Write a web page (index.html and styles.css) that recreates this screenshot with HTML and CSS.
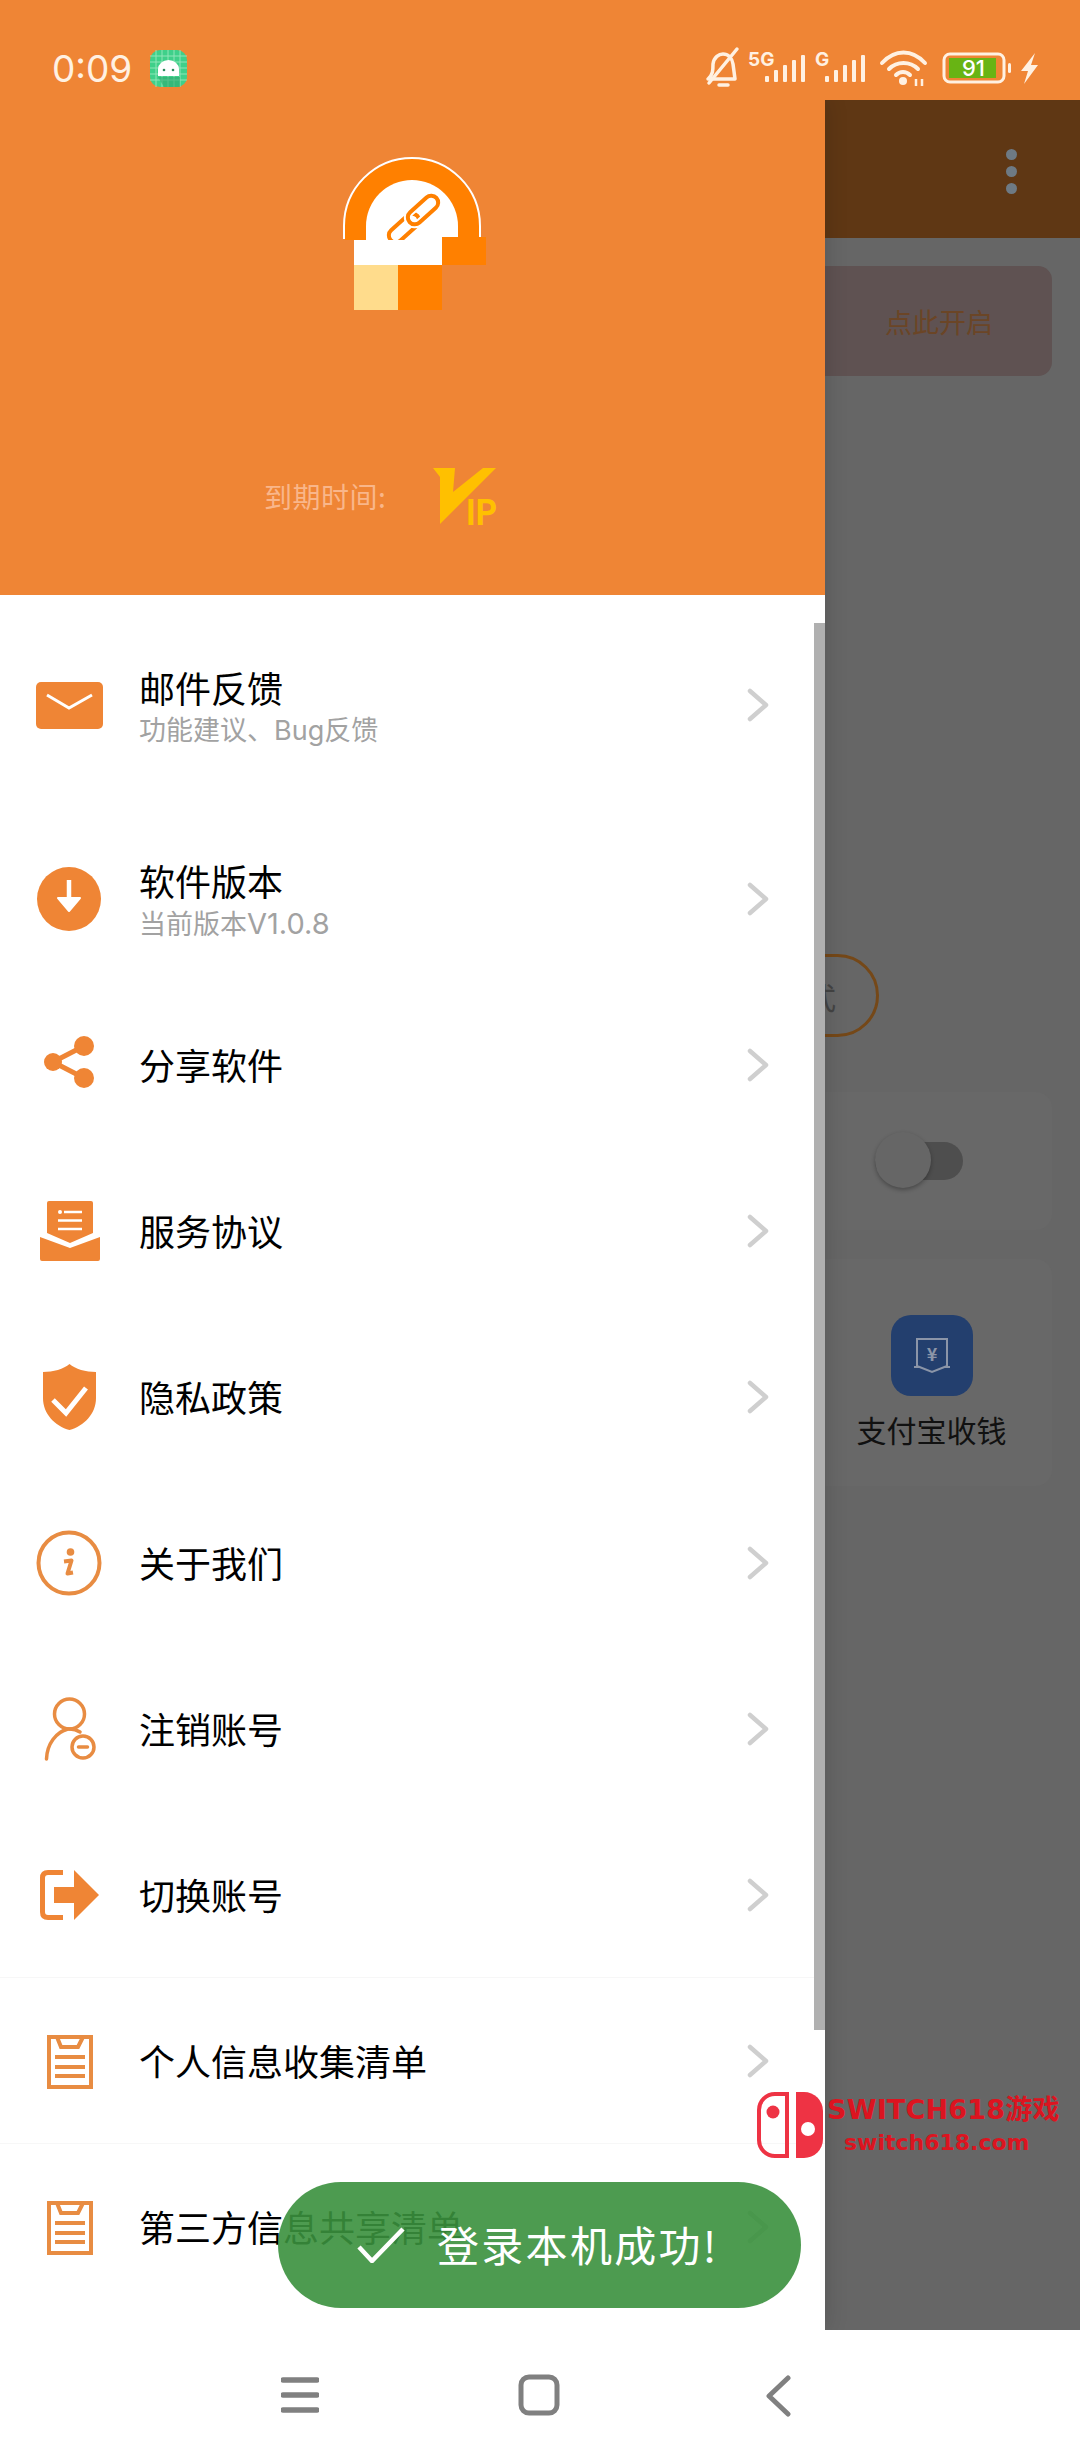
FILE: index.html
```html
<!DOCTYPE html>
<html lang="zh-CN">
<head>
<meta charset="utf-8">
<title>抽屉菜单</title>
<link rel="stylesheet" href="styles.css">
</head>
<body>
<div class="app">
  <header class="status">
    <span class="time">0:09</span>
    <svg class="android" viewBox="0 0 37 37">
      <rect width="37" height="37" rx="10" fill="#3fd08a"/>
      <path d="M6 0V37M12 0V37M18 0V37M24 0V37M30 0V37M0 6H37M0 12H37M0 18H37M0 24H37M0 30H37" stroke="#8fe6b8" stroke-width="1"/>
      <path d="M8 27L14 37H30V27Z" fill="#2fa86e" opacity=".6"/>
      <path d="M8 26V19A10.500 9 0 0 1 29 19V26Z" fill="#fff"/>
      <circle cx="14" cy="20" r="1.300" fill="#2a8a5c"/><circle cx="23" cy="20" r="1.300" fill="#2a8a5c"/>
    </svg>
    <svg class="indicators" viewBox="700 45 340 45">
      <g fill="none" stroke="#fff1e2" stroke-width="3.500" stroke-linecap="round" stroke-linejoin="round">
        <path d="M708 79C713 75 713 70 713 64C714 57 719 54 723 54C728 54 732 58 733 64L735 79Z"/>
        <path d="M737 49L709 83"/>
        <path d="M719 85H728"/>
      </g>
      <text class="net" x="748" y="66">5G</text>
      <g fill="#fff1e2">
        <rect x="765" y="76" width="4" height="6" rx="1"/><rect x="774" y="70" width="4" height="12" rx="1"/><rect x="783" y="65" width="4" height="17" rx="1"/><rect x="792" y="60" width="4" height="22" rx="1"/><rect x="801" y="55" width="4" height="27" rx="1"/>
      </g>
      <text class="net" x="815" y="66">G</text>
      <g fill="#fff1e2">
        <rect x="825" y="76" width="4" height="6" rx="1"/><rect x="834" y="70" width="4" height="12" rx="1"/><rect x="843" y="65" width="4" height="17" rx="1"/><rect x="852" y="60" width="4" height="22" rx="1"/><rect x="861" y="55" width="4" height="27" rx="1"/>
      </g>
      <g fill="none" stroke="#fff1e2" stroke-width="4" stroke-linecap="round">
        <path d="M882 63C895 49 912 49 925 63"/>
        <path d="M889 69C897 61 910 61 918 69"/>
        <path d="M896 75C900 71 906 71 910 75"/>
      </g>
      <circle cx="903" cy="81" r="4" fill="#fff1e2"/>
      <path d="M916 79V86M922 79V86" stroke="#fff1e2" stroke-width="2.500"/>
      <rect x="944" y="54" width="60" height="28" rx="6" fill="none" stroke="#fff1e2" stroke-width="3"/>
      <rect x="949" y="58" width="47" height="20" fill="#68b414"/>
      <text class="batt" x="962" y="76">91</text>
      <rect x="1008" y="63" width="3" height="10" rx="1.500" fill="#fff1e2"/>
      <path d="M1035 53L1021 71H1028L1024 84L1038 65H1031Z" fill="#fff1e2"/>
    </svg>
  </header>

  <main class="main">
    <aside class="drawer">
      <section class="drawer-head">
        <svg class="logo" viewBox="340 157 146 153">
          <path d="M345 240V226A67 67 0 0 1 479 226V240Z" fill="#ff8000"/>
          <path d="M344 239V226A68 68 0 0 1 480 226V239" fill="none" stroke="#fff" stroke-width="2"/>
          <path d="M366 240V226A46 46 0 0 1 458 226V240Z" fill="#fff"/>
          <g fill="none" stroke-width="4">
            <rect x="386" y="221" width="36" height="14" rx="7" transform="rotate(-42 404 228)" stroke="#ff8000"/>
            <rect x="405" y="203" width="36" height="14" rx="7" transform="rotate(-42 423 210)" stroke="#fff" stroke-width="8"/>
            <rect x="405" y="203" width="36" height="14" rx="7" transform="rotate(-42 423 210)" stroke="#ff8000"/>
          </g>
          <rect x="354" y="240" width="88" height="25" fill="#fff"/>
          <rect x="442" y="237" width="44" height="28" fill="#ff8000"/>
          <rect x="354" y="265" width="44" height="45" fill="#ffdc8c"/>
          <rect x="398" y="265" width="44" height="45" fill="#ff8000"/>
        </svg>
        <div class="expiry">
          <span class="expiry-label">到期时间:</span>
          <svg class="vip" viewBox="0 0 64 58">
            <path d="M0 1H22L20 25L50 1H63L7 57V10Z" fill="#ffc000"/>
            <text class="vip-text" x="33" y="58" textLength="31" lengthAdjust="spacingAndGlyphs">IP</text>
          </svg>
        </div>
      </section>

      <nav class="menu">
        <a class="row row-first">
          <svg class="ico" viewBox="0 0 70 70"><rect x="2" y="12" width="67" height="47" rx="5" fill="#ef8535"/><path d="M13 25L35 38L58 25" fill="none" stroke="#fff" stroke-width="3"/></svg>
          <div class="labels labels-two"><div class="title">邮件反馈</div><div class="sub">功能建议、Bug反馈</div></div>
          <svg class="chev" viewBox="0 0 24 34"><path d="M4 3L20 17L4 31" /></svg>
        </a>
        <a class="row row-second">
          <svg class="ico" viewBox="0 0 70 70"><circle cx="35" cy="35" r="32" fill="#ef8535"/><path d="M35 16V36" stroke="#fff" stroke-width="4.500"/><path d="M24 34H46L35 47Z" fill="#fff" stroke="#fff" stroke-width="2" stroke-linejoin="round"/></svg>
          <div class="labels labels-two"><div class="title">软件版本</div><div class="sub">当前版本<span class="ver">V1.0.8</span></div></div>
          <svg class="chev" viewBox="0 0 24 34"><path d="M4 3L20 17L4 31" /></svg>
        </a>
        <a class="row">
          <svg class="ico" viewBox="0 0 70 70"><path d="M50 16L19 32L50 48" fill="none" stroke="#ef8535" stroke-width="5"/><circle cx="19" cy="32" r="9" fill="#ef8535"/><circle cx="50" cy="16" r="10" fill="#ef8535"/><circle cx="50" cy="48" r="10" fill="#ef8535"/></svg>
          <div class="labels"><div class="title">分享软件</div></div>
          <svg class="chev" viewBox="0 0 24 34"><path d="M4 3L20 17L4 31" /></svg>
        </a>
        <a class="row">
          <svg class="ico" viewBox="0 0 70 70"><path d="M13 7Q13 5 15 5H57Q59 5 59 7V37L36 47L13 37Z" fill="#ef8535"/><path d="M6 41L36 52L66 41V63Q66 65 64 65H8Q6 65 6 63Z" fill="#ef8535"/><circle cx="26" cy="16" r="2" fill="#fff"/><path d="M30 16H48M24 24.500H48M24 33H48" stroke="#fff" stroke-width="2.500"/></svg>
          <div class="labels"><div class="title">服务协议</div></div>
          <svg class="chev" viewBox="0 0 24 34"><path d="M4 3L20 17L4 31" /></svg>
        </a>
        <a class="row">
          <svg class="ico" viewBox="0 0 70 70"><path d="M35.500 2C41 7 52 10 62 10V36C62 52 50 64 35.500 68C21 64 9 52 9 36V10C19 10 30 7 35.500 2Z" fill="#ef8535"/><path d="M19 38L32 51L52 26" fill="none" stroke="#fff" stroke-width="5"/></svg>
          <div class="labels"><div class="title">隐私政策</div></div>
          <svg class="chev" viewBox="0 0 24 34"><path d="M4 3L20 17L4 31" /></svg>
        </a>
        <a class="row">
          <svg class="ico" viewBox="0 0 70 70"><circle cx="35" cy="35" r="30.500" fill="none" stroke="#e88c42" stroke-width="4"/><circle cx="36.500" cy="24" r="3.800" fill="#e88c42"/><path d="M30 33.500L37.500 32.500L33.500 45.500L39 44.500" fill="none" stroke="#e88c42" stroke-width="4" stroke-linejoin="round"/></svg>
          <div class="labels"><div class="title">关于我们</div></div>
          <svg class="chev" viewBox="0 0 24 34"><path d="M4 3L20 17L4 31" /></svg>
        </a>
        <a class="row">
          <svg class="ico" viewBox="0 0 70 70"><g fill="none" stroke="#e88c42" stroke-width="3.500" stroke-linecap="round"><circle cx="35.500" cy="20" r="15"/><path d="M12.500 65C13 50 22 38 34 35C39 34.500 43 36 46 38"/><circle cx="49" cy="53" r="11"/><path d="M44.500 53H53.500"/></g></svg>
          <div class="labels"><div class="title">注销账号</div></div>
          <svg class="chev" viewBox="0 0 24 34"><path d="M4 3L20 17L4 31" /></svg>
        </a>
        <a class="row row-line">
          <svg class="ico" viewBox="0 0 70 70"><path d="M29 12.500H14Q8.500 12.500 8.500 18V52Q8.500 57.500 14 57.500H29" fill="none" stroke="#ef8535" stroke-width="5"/><path d="M20 27H40V10L65 35L40 60V43H20Z" fill="#ef8535"/></svg>
          <div class="labels"><div class="title">切换账号</div></div>
          <svg class="chev" viewBox="0 0 24 34"><path d="M4 3L20 17L4 31" /></svg>
        </a>
        <a class="row row-line">
          <svg class="ico" viewBox="0 0 70 70"><g fill="none" stroke="#e88c42" stroke-width="4"><rect x="15" y="11" width="42" height="50"/><path d="M23 11L27 21H44L49 11"/><path d="M21 31H51M21 41H51M21 50H51"/></g></svg>
          <div class="labels"><div class="title">个人信息收集清单</div></div>
          <svg class="chev" viewBox="0 0 24 34"><path d="M4 3L20 17L4 31" /></svg>
        </a>
        <a class="row">
          <svg class="ico" viewBox="0 0 70 70"><g fill="none" stroke="#e88c42" stroke-width="4"><rect x="15" y="11" width="42" height="50"/><path d="M23 11L27 21H44L49 11"/><path d="M21 31H51M21 41H51M21 50H51"/></g></svg>
          <div class="labels"><div class="title">第三方信息共享清单</div></div>
          <svg class="chev" viewBox="0 0 24 34"><path d="M4 3L20 17L4 31" /></svg>
        </a>
      </nav>
      <div class="scrollbar"></div>
    </aside>

    <section class="behind">
      <div class="toolbar">
        <span class="dots"><i></i><i></i><i></i></span>
      </div>
      <div class="banner"><span>点此开启</span></div>
      <div class="oval-clip"><div class="oval">式</div></div>
      <div class="card card-switch">
        <div class="switch"><span class="knob"></span></div>
      </div>
      <div class="card card-pay">
        <div class="pay-icon">
          <svg viewBox="0 0 36 36" class="pay-svg"><path d="M3 1H33V28L18 34L3 28Z" fill="none" stroke="#8b95a8" stroke-width="2"/><path d="M0 29H5M31 29H36" stroke="#8b95a8" stroke-width="2"/><text class="yen" x="18" y="23">¥</text></svg>
        </div>
        <div class="pay-label">支付宝收钱</div>
      </div>
    </section>
  </main>

  <footer class="navbar">
    <svg class="nav-menu" viewBox="0 0 38 36"><path d="M2 3H36M2 18H36M2 33H36"/></svg>
    <svg class="nav-home" viewBox="0 0 42 42"><rect x="3" y="3" width="36" height="36" rx="8"/></svg>
    <svg class="nav-back" viewBox="0 0 26 42"><path d="M23 3L4 21L23 39"/></svg>
  </footer>

  <div class="watermark">
    <svg class="wm-logo" viewBox="0 0 66 66">
      <path d="M30 2H18A16 16 0 0 0 2 18V48A16 16 0 0 0 18 64H30Z" fill="none" stroke="#ee3344" stroke-width="4"/>
      <circle cx="16" cy="20" r="6.500" fill="#ee3344"/>
      <path d="M39 0H47A19 19 0 0 1 66 19V47A19 19 0 0 1 47 66H39Z" fill="#ee3344"/>
      <circle cx="51" cy="37" r="7" fill="#fff"/>
    </svg>
    <div class="wm-text">
      <div class="wm-big">SWITCH618游戏</div>
      <div class="wm-small">switch618.com</div>
    </div>
  </div>

  <div class="toast">
    <svg class="toast-check" viewBox="0 0 48 36"><path d="M2 20L15 34L46 2"/></svg>
    <span>登录本机成功!</span>
  </div>
</div>
</body>
</html>
```

FILE: styles.css
```css
* { box-sizing: border-box; }
html, body { margin: 0; padding: 0; }
body { font-family: Inter, "Noto Sans CJK SC", sans-serif; background: #fff; }

.app {
  position: relative;
  width: 1080px;
  height: 2460px;
  overflow: hidden;
  display: flex;
  flex-direction: column;
  background: #fff;
}

/* status bar */
.status {
  height: 100px;
  flex: none;
  background: #ef8535;
  display: flex;
  align-items: flex-start;
  padding-left: 52px;
}
.time {
  font-family: Inter, sans-serif;
  font-size: 37px;
  line-height: 37px;
  margin-top: 50px;
  color: #fff1e2;
  width: 98px;
}
.android { width: 37px; height: 37px; margin-top: 50px; }
.indicators { width: 340px; height: 45px; margin-top: 45px; margin-left: 513px; }
.net { font: 700 19px Inter, sans-serif; fill: #fff1e2; }
.batt { font: 500 22px Inter, sans-serif; fill: #fff; }

/* main split */
.main { flex: 1; display: flex; min-height: 0; overflow: hidden; }

.drawer {
  position: relative;
  width: 825px;
  flex: none;
  background: #fff;
  z-index: 2;
  box-shadow: 0 0 22px rgba(0, 0, 0, .16);
}
.drawer-head {
  height: 495px;
  background: #ef8535;
  display: flex;
  flex-direction: column;
}
.logo { width: 146px; height: 153px; margin: 57px 0 0 340px; display: block; }
.expiry { display: flex; align-items: center; height: 58px; margin-top: 157px; padding-left: 264px; }
.expiry-label {
  font-family: "Noto Sans CJK SC", sans-serif;
  font-size: 28px;
  line-height: 40px;
  color: #f9b68a;
  letter-spacing: .5px;
  width: 169px;
}
.vip { width: 64px; height: 58px; display: block; overflow: visible; }
.vip-text { font: 700 36px Roboto, sans-serif; fill: #ffc000; }

/* menu */
.menu { display: flex; flex-direction: column; }
.row {
  height: 166px;
  display: flex;
  align-items: center;
  padding-left: 34px;
  padding-right: 55px;
}
.row-first { height: 220px; }
.row-second { height: 167px; }
.row-line { border-bottom: 1px solid #f7f7f7; }
.ico { width: 70px; height: 70px; flex: none; display: block; }
.labels { flex: 1; margin-left: 35px; padding-bottom: 2px; font-family: "Noto Sans CJK SC", sans-serif; }
.labels-two { padding: 8px 0 0; }
.title { font-size: 36px; line-height: 44px; color: #000; }
.sub { font-family: Inter, "Noto Sans CJK SC", sans-serif; font-size: 27px; line-height: 44px; color: #a2a2a2; }
.ver { font-size: 29px; }
.chev { width: 24px; height: 34px; flex: none; display: block; }
.chev path { fill: none; stroke: #cfcfcf; stroke-width: 4.500px; stroke-linecap: round; stroke-linejoin: round; }
.scrollbar {
  position: absolute;
  top: 523px;
  right: 0;
  width: 11px;
  height: 1407px;
  background: #b0b0b0;
}

/* dimmed page behind the drawer */
.behind { flex: 1; background: #666; display: flex; flex-direction: column; overflow: hidden; }
.toolbar {
  height: 138px;
  flex: none;
  background: #5f3714;
  display: flex;
  justify-content: flex-end;
  align-items: center;
  padding-right: 63px;
}
.dots { display: flex; flex-direction: column; gap: 6px; margin-top: 4px; }
.dots i { display: block; width: 11px; height: 11px; border-radius: 50%; background: #6e7a84; }
.banner {
  height: 110px;
  flex: none;
  margin: 28px 28px 0 0;
  border-radius: 0 14px 14px 0;
  background: #5f5252;
  display: flex;
  align-items: center;
  padding: 0 0 0 60px;
  font-family: "Noto Sans CJK SC", sans-serif;
  font-size: 27px;
  color: #6b4526;
}
.oval-clip { height: 83px; flex: none; margin-top: 578px; width: 54px; overflow: hidden; position: relative; }
.oval {
  width: 140px;
  height: 83px;
  margin-left: -86px;
  border: 3px solid #754818;
  border-radius: 42px;
  display: flex;
  align-items: center;
  justify-content: flex-end;
  padding-right: 40px;
  font-family: "Noto Sans CJK SC", sans-serif;
  font-size: 30px;
  color: #444;
}
.card { flex: none; margin-right: 28px; background: #686868; border-radius: 0 16px 16px 0; }
.card-switch {
  height: 138px;
  margin-top: 55px;
  display: flex;
  align-items: center;
  padding-left: 50px;
}
.switch { position: relative; width: 88px; height: 38px; background: #4e4e4e; border-radius: 19px; }
.knob {
  position: absolute;
  left: 0;
  top: -10px;
  width: 56px;
  height: 56px;
  border-radius: 50%;
  background: #666;
  box-shadow: 0 2px 4px rgba(0, 0, 0, .3);
}
.card-pay {
  height: 227px;
  margin-top: 29px;
  display: flex;
  flex-direction: column;
  align-items: center;
  padding: 56px 14px 0 0;
}
.pay-icon {
  width: 82px;
  height: 81px;
  border-radius: 20px;
  background: #233f6e;
  display: flex;
  align-items: center;
  justify-content: center;
}
.pay-svg { width: 36px; height: 36px; display: block; }
.yen { font: 700 18px "Noto Sans CJK SC", sans-serif; fill: #8b95a8; text-anchor: middle; }
.pay-label {
  font-family: "Noto Sans CJK SC", sans-serif;
  font-size: 30px;
  line-height: 40px;
  margin-top: 13px;
  color: #111;
}

/* navigation bar */
.navbar { height: 130px; flex: none; background: #fff; position: relative; display: flex; align-items: flex-start; padding-left: 281px; }
.navbar svg { display: block; fill: none; stroke: #808080; stroke-linecap: round; }
.nav-menu { width: 38px; height: 36px; margin-top: 47px; stroke-width: 5px; }
.nav-menu path { stroke-width: 5.500px; }
.nav-home { width: 42px; height: 42px; margin: 44px 0 0 199px; stroke-width: 5px; }
.nav-back { width: 26px; height: 42px; margin: 45px 0 0 205px; stroke-width: 5px; stroke-linejoin: round; }

/* overlays */
.watermark {
  position: absolute;
  left: 757px;
  top: 2092px;
  display: flex;
  z-index: 4;
}
.wm-logo { width: 66px; height: 66px; display: block; flex: none; }
.wm-text { margin-left: 4px; color: #dc1420; font-family: "DejaVu Sans", "Noto Sans CJK SC", sans-serif; font-weight: 700; white-space: nowrap; }
.wm-big { font-size: 27px; line-height: 36px; letter-spacing: .2px; }
.wm-small { font-size: 22px; line-height: 30px; margin: 0 0 0 17px; }

.toast {
  position: absolute;
  left: 278px;
  top: 2182px;
  width: 523px;
  height: 126px;
  border-radius: 63px;
  background: rgba(58, 144, 61, .9);
  display: flex;
  align-items: center;
  padding-left: 79px;
  color: #fff;
  font-family: "Noto Sans CJK SC", sans-serif;
  font-size: 42px;
  z-index: 5;
}
.toast span { margin-left: 32px; margin-bottom: 4px; letter-spacing: 2.300px; }
.toast-check { width: 48px; height: 36px; display: block; fill: none; stroke: #fff; stroke-width: 4.500px; }
```
